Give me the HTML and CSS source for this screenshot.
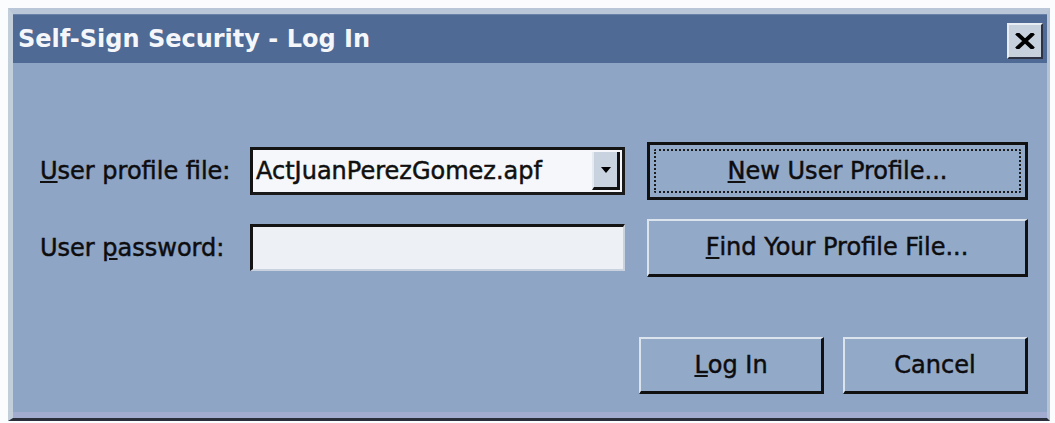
FILE: index.html
```html
<!DOCTYPE html>
<html lang="en">
<head>
<meta charset="utf-8">
<title>Self-Sign Security - Log In</title>
<link rel="stylesheet" href="styles.css">
</head>
<body>
<div class="window">
  <div class="titlebar">
    <span class="title">Self-Sign Security - Log In</span>
    <button class="close" aria-label="Close">
      <svg width="20" height="16" viewBox="0 0 20 16"><path d="M3 1.5 L17 14.5 M17 1.5 L3 14.5" stroke="#000" stroke-width="4" stroke-linecap="square"/></svg>
    </button>
  </div>
  <div class="content">
    <div class="form">
      <label class="label"><u>U</u>ser profile file:</label>
      <div class="combo">
        <span class="combo-text">ActJuanPerezGomez.apf</span>
        <span class="combo-btn"><svg width="10" height="6" viewBox="0 0 10 6"><path d="M0 0 H10 L5 6 Z" fill="#000"/></svg></span>
      </div>
      <button class="btn btn-default"><span class="focus"><u>N</u>ew User Profile...</span></button>

      <label class="label">User <u>p</u>assword:</label>
      <div class="field"></div>
      <button class="btn"><u>F</u>ind Your Profile File...</button>
    </div>
    <div class="actions">
      <button class="btn btn-small"><u>L</u>og In</button>
      <button class="btn btn-small">Cancel</button>
    </div>
  </div>
</div>
</body>
</html>
```

FILE: styles.css
```css
html, body {
  margin: 0;
  padding: 0;
  background: #fbfcfd;
}

body {
  font-family: "DejaVu Sans", Verdana, sans-serif;
  color: #0c0c10;
}

.window {
  box-sizing: border-box;
  margin: 8px 0 0 8px;
  width: 1042px;
  height: 413px;
  background: #8ea5c5;
  border-top: 6px solid #b9c7d8;
  border-left: 5px solid #c3cedb;
  border-right: 3px solid #b5c3d6;
  border-bottom: 3px solid #2b2f3c;
  box-shadow: inset 0 -6px 0 #a2acd0;
  display: flex;
  flex-direction: column;
}

.titlebar {
  height: 49px;
  background: #4f6a95;
  border-top: 1px solid #6a82a8;
  box-sizing: border-box;
  display: flex;
  align-items: center;
  justify-content: space-between;
  padding: 0 4px 0 5px;
}

.title {
  color: #f4f6fa;
  font-family: "DejaVu Sans", Verdana, sans-serif;
  font-weight: bold;
  font-size: 24px;
}

.close {
  box-sizing: border-box;
  width: 36px;
  height: 36px;
  padding: 0;
  margin-top: 3px;
  background: #c7d1de;
  border-style: solid;
  border-width: 2px;
  border-color: #e8edf3 #2c3242 #2c3242 #e8edf3;
  display: flex;
  align-items: center;
  justify-content: center;
}

.content {
  flex: 1;
  padding: 79px 0 0 27px;
}

.form {
  display: grid;
  grid-template-columns: 188px 375px 381px;
  grid-template-rows: 58px 59px;
  column-gap: 22px;
  row-gap: 18px;
  align-items: center;
}

.label,
.combo-text,
.btn {
  font-size: 24px;
  -webkit-text-stroke: 0.5px #111;
}

.label {
  white-space: nowrap;
}

.combo {
  box-sizing: border-box;
  height: 48px;
  background: #f5f7fa;
  border-style: solid;
  border-width: 3px;
  border-color: #141414 #1a1a1a #1a1a1a #141414;
  display: flex;
  align-items: center;
  justify-content: space-between;
  padding: 0 2px 0 3px;
}

.combo-text {
  color: #101010;
  white-space: nowrap;
}

.combo-btn {
  box-sizing: border-box;
  width: 28px;
  height: 38px;
  background: #c9d3df;
  border-right: 3px solid #111;
  border-bottom: 3px solid #111;
  border-left: 2px solid #e6ebf2;
  display: flex;
  align-items: center;
  justify-content: center;
}

.field {
  box-sizing: border-box;
  height: 47px;
  background: #edf0f5;
  border-style: solid;
  border-width: 3px 2px 2px 3px;
  border-color: #141414 #c9d3df #c9d3df #141414;
}

.btn {
  box-sizing: border-box;
  height: 58px;
  width: 100%;
  background: #93a9c8;
  font-family: inherit;
  color: #0c0c10;
  border-style: solid;
  border-width: 2px 3px 3px 2px;
  border-color: #dbe3ed #111 #111 #dbe3ed;
  padding: 0;
  display: flex;
  align-items: center;
  justify-content: center;
  white-space: nowrap;
}

.btn-default {
  border: 3px solid #111;
  padding: 4px;
}

.focus {
  flex: 1;
  align-self: stretch;
  display: flex;
  align-items: center;
  justify-content: center;
  border: 2px dotted #1c1c1c;
  border-radius: 2px;
}

.actions {
  display: flex;
  justify-content: flex-end;
  gap: 19px;
  margin-top: 60px;
  width: 988px;
}

.btn-small {
  width: 185px;
  height: 57px;
}
```
